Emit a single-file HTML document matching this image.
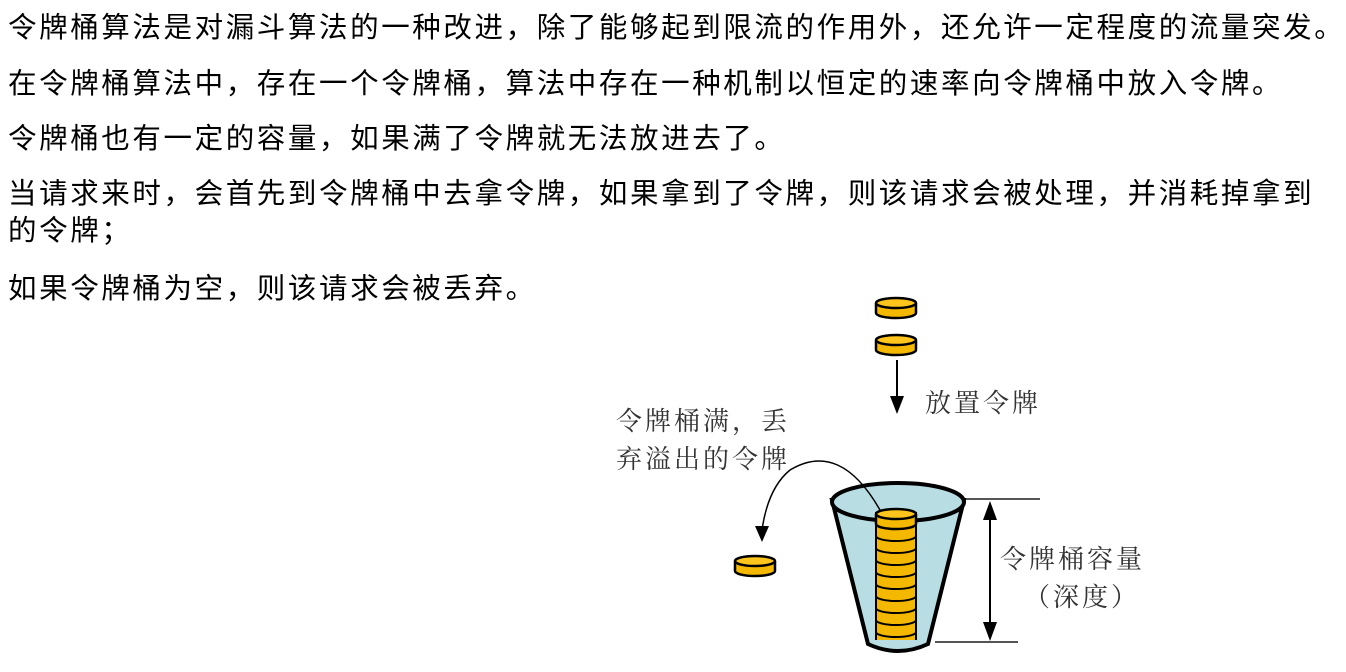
<!DOCTYPE html>
<html><head><meta charset="utf-8"><style>
body{margin:0;background:#fff;width:1346px;height:672px;overflow:hidden;font-family:"Liberation Sans","Noto Sans CJK SC",sans-serif;color:#000}
p{position:absolute;left:8px;margin:0;font-size:28.5px;letter-spacing:2.6px;line-height:37px;width:1400px;white-space:nowrap}
svg{position:absolute;left:0;top:0}
.s{font-family:"Liberation Serif","Noto Serif CJK SC",serif;font-size:26px;letter-spacing:3px;fill:#333}
</style></head><body>
<p style="top:10px">令牌桶算法是对漏斗算法的一种改进，除了能够起到限流的作用外，还允许一定程度的流量突发。</p>
<p style="top:66px">在令牌桶算法中，存在一个令牌桶，算法中存在一种机制以恒定的速率向令牌桶中放入令牌。</p>
<p style="top:121px">令牌桶也有一定的容量，如果满了令牌就无法放进去了。</p>
<p style="top:176px">当请求来时，会首先到令牌桶中去拿令牌，如果拿到了令牌，则该请求会被处理，并消耗掉拿到<br>的令牌；</p>
<p style="top:271px">如果令牌桶为空，则该请求会被丢弃。</p>
<svg width="1346" height="672">
<defs><g id="c"><path d="M0 6 V16 A20 5 0 0 0 40 16 V6" fill="#f5b800" stroke="#000" stroke-width="2.5"/><ellipse cx="20" cy="6" rx="20" ry="5" fill="#ffc51c" stroke="#000" stroke-width="2.5"/></g>
<g id="r"><path d="M0 4 A20 5 0 0 0 40 4" fill="none" stroke="#000" stroke-width="2"/></g></defs>
<use href="#c" x="876" y="297"/><use href="#c" x="876" y="334"/>
<line x1="897" y1="360" x2="897" y2="398" stroke="#000" stroke-width="2"/><path d="M890 396 L904 396 L897 414Z"/>
<text class="s" x="925" y="412">放置令牌</text>
<text class="s" x="616" y="430">令牌桶满，丢</text>
<text class="s" x="616" y="468">弃溢出的令牌</text>
<path d="M832 500 L868 644 Q898 658 928 644 L964 500Z" fill="#b8dde3" stroke="#000" stroke-width="4"/>
<ellipse cx="898" cy="502" rx="66" ry="19" fill="#b8dde3" stroke="#000" stroke-width="4"/>
<rect x="876" y="512" width="40" height="128" fill="#f5b800"/>
<g><use href="#r" x="876" y="520"/><use href="#r" x="876" y="532"/><use href="#r" x="876" y="544"/><use href="#r" x="876" y="556"/><use href="#r" x="876" y="568"/><use href="#r" x="876" y="580"/><use href="#r" x="876" y="592"/><use href="#r" x="876" y="604"/><use href="#r" x="876" y="616"/><use href="#r" x="876" y="628"/></g>
<line x1="876" y1="512" x2="876" y2="640" stroke="#000" stroke-width="2"/><line x1="916" y1="512" x2="916" y2="640" stroke="#000" stroke-width="2"/>
<use href="#c" x="876" y="508"/>
<path d="M880 510 Q840 440 790 470 Q768 488 762 530" fill="none" stroke="#000" stroke-width="1.5"/><path d="M755 526 L769 526 L762 542Z"/>
<use href="#c" x="735" y="555"/>
<line x1="966" y1="499" x2="1040" y2="499" stroke="#555" stroke-width="2"/>
<line x1="935" y1="642" x2="1018" y2="642" stroke="#555" stroke-width="2"/>
<line x1="990" y1="505" x2="990" y2="637" stroke="#000" stroke-width="2"/>
<path d="M983 520 L997 520 L990 501Z M983 622 L997 622 L990 641Z"/>
<text class="s" x="1000" y="568">令牌桶容量</text>
<text class="s" x="1024" y="606">（深度）</text>
</svg>
</body></html>
